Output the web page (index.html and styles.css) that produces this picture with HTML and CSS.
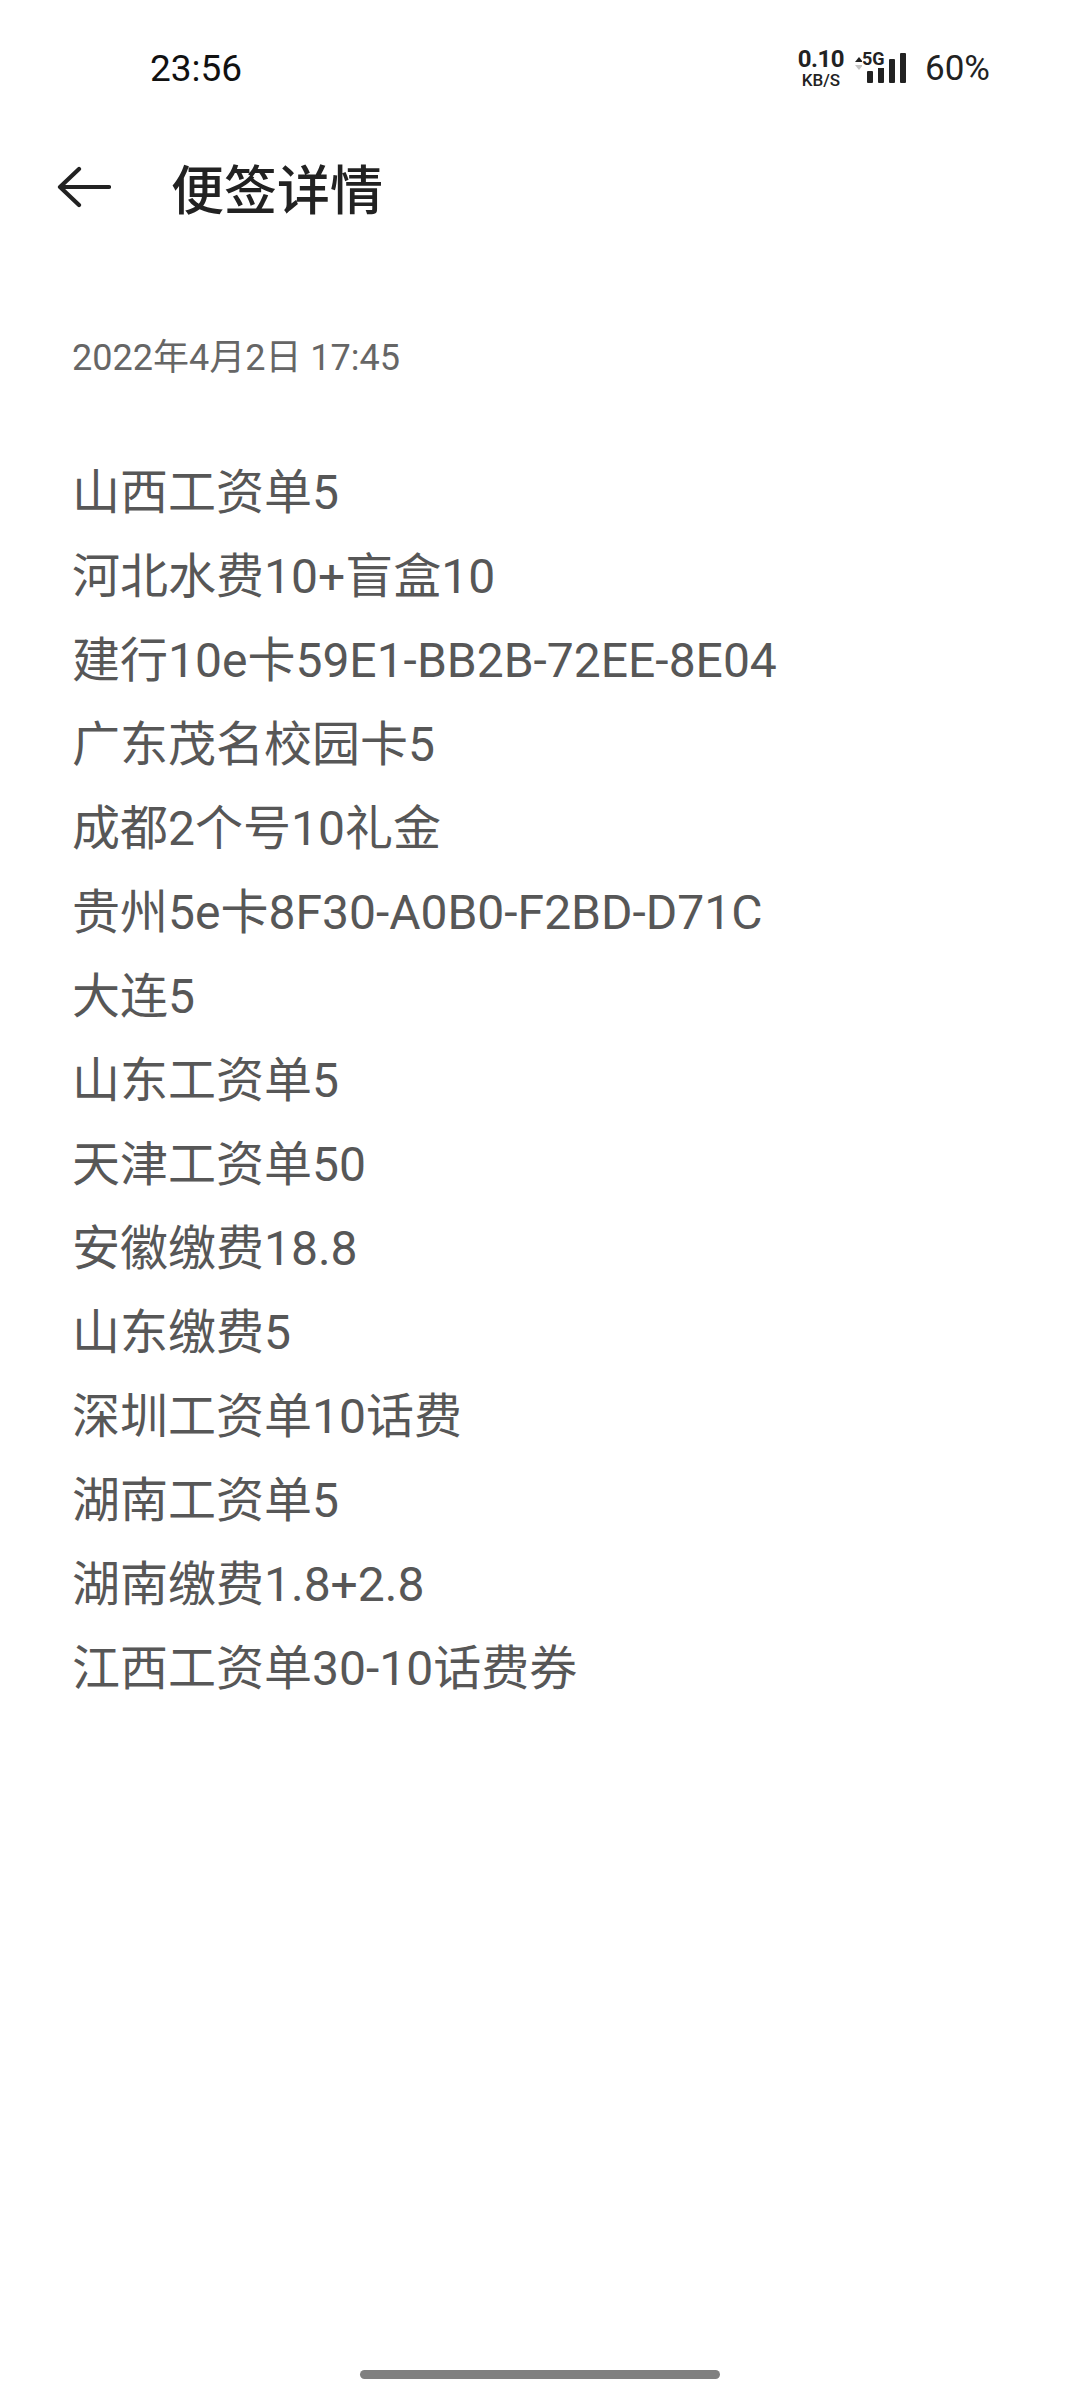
FILE: index.html
```html
<!DOCTYPE html>
<html lang="zh-CN">
<head>
<meta charset="utf-8">
<title>便签详情</title>
<link rel="stylesheet" href="styles.css">
</head>
<body>
<div class="page">
  <div class="status">
    <span class="time">23:56</span>
    <div class="status-right">
      <div class="speed"><span class="speed-num">0.10</span><span class="speed-unit">KB/S</span></div>
      <div class="net">
        <svg class="arrows" width="10" height="16" viewBox="0 0 10 16">
          <path d="M5 1 L9 6 L1 6 Z" fill="#222"/>
          <path d="M5 14 L9 9 L1 9 Z" fill="#c4c4c4"/>
        </svg>
        <div class="net-sig">
          <span class="g5">5G</span>
          <svg class="bars" width="42" height="30" viewBox="0 0 42 30">
            <rect x="0" y="18" width="6" height="12" rx="1" fill="#222"/>
            <rect x="11" y="12" width="6" height="18" rx="1" fill="#222"/>
            <rect x="22" y="6" width="6" height="24" rx="1" fill="#222"/>
            <rect x="33" y="0" width="6" height="30" rx="1" fill="#222"/>
          </svg>
        </div>
      </div>
      <span class="battery">60%</span>
    </div>
  </div>

  <div class="appbar">
    <svg class="back" width="54" height="42" viewBox="0 0 54 42">
      <path d="M52 21 H4 M22 3 L3 21 L22 39" fill="none" stroke="#222" stroke-width="4.2" stroke-linecap="round" stroke-linejoin="round"/>
    </svg>
    <h1 class="title">便签详情</h1>
  </div>

  <div class="date">2022年4月2日 17:45</div>

  <div class="note">
    <p>山西工资单5</p>
    <p>河北水费10+盲盒10</p>
    <p>建行10e卡59E1-BB2B-72EE-8E04</p>
    <p>广东茂名校园卡5</p>
    <p>成都2个号10礼金</p>
    <p>贵州5e卡8F30-A0B0-F2BD-D71C</p>
    <p>大连5</p>
    <p>山东工资单5</p>
    <p>天津工资单50</p>
    <p>安徽缴费18.8</p>
    <p>山东缴费5</p>
    <p>深圳工资单10话费</p>
    <p>湖南工资单5</p>
    <p>湖南缴费1.8+2.8</p>
    <p>江西工资单30-10话费券</p>
  </div>

  <div class="navbar"><span class="handle"></span></div>
</div>
</body>
</html>
```

FILE: styles.css
```css
* { box-sizing: border-box; }
html, body { margin: 0; padding: 0; background: #fff; }
body {
  font-family: Roboto, "Noto Sans CJK SC", "Noto Sans", sans-serif;
  color: #222;
}
.page {
  width: 1080px;
  height: 2400px;
  display: flex;
  flex-direction: column;
  overflow: hidden;
}
.status {
  height: 136px;
  display: flex;
  align-items: center;
  justify-content: space-between;
  padding: 0 90px 0 150px;
}
.time {
  font-size: 37px;
  font-weight: 400;
  color: #111;
}
.status-right {
  display: flex;
  align-items: center;
}
.speed {
  display: flex;
  flex-direction: column;
  align-items: center;
  line-height: 1;
  font-weight: 700;
  color: #222;
  margin-right: 10px;
}
.speed-num { font-size: 24px; letter-spacing: -0.5px; }
.speed-unit { font-size: 17px; margin-top: 1px; font-weight: 500; }
.net {
  display: flex;
  align-items: flex-start;
  margin-right: 16px;
}
.arrows { margin-top: 3px; margin-right: 3px; }
.net-sig {
  position: relative;
  width: 42px;
  height: 30px;
}
.g5 {
  position: absolute;
  left: -5px;
  top: -3px;
  font-size: 18px;
  font-weight: 700;
  line-height: 1;
  color: #222;
  background: #fff;
  padding-right: 1px;
}
.bars { display: block; }
.battery {
  font-size: 35px;
  font-weight: 400;
  color: #222;
}
.appbar {
  height: 102px;
  display: flex;
  align-items: center;
  padding-left: 57px;
}
.back { display: block; margin-right: 60px; }
.title {
  margin: 0;
  font-family: "Noto Sans CJK SC", sans-serif;
  font-size: 53px;
  font-weight: 500;
  color: #222;
  line-height: 1;
}
.date {
  margin-top: 96px;
  padding-left: 72px;
  font-size: 36px;
  line-height: 48px;
  color: #666;
}
.note {
  margin-top: 69px;
  padding-left: 72px;
}
.note p {
  margin: 0;
  font-size: 48px;
  line-height: 84px;
  color: #575757;
  white-space: nowrap;
}
.navbar {
  margin-top: auto;
  height: 30px;
  display: flex;
  justify-content: center;
  align-items: flex-start;
}
.handle {
  width: 360px;
  height: 9px;
  border-radius: 5px;
  background: #808080;
}
```
